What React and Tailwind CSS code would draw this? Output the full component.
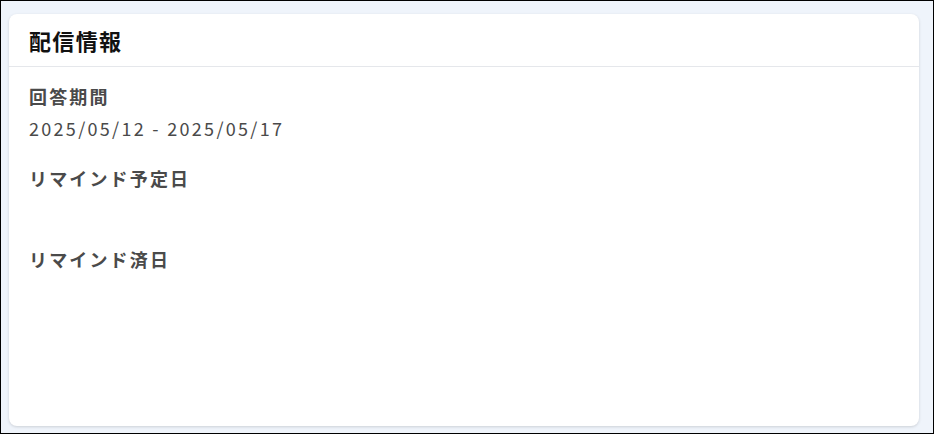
export default function App() {
  return (
    <div
      className="h-[434px] w-[934px] border border-black bg-[#eff4fb] pt-[13px] pl-[8px] pr-[14px] pb-[7px] flex"
      style={{ fontFamily: '"Noto Sans CJK JP", "Noto Sans", sans-serif' }}
    >
      <div className="flex-1 flex flex-col rounded-lg bg-white shadow-[0_1px_3px_rgba(0,0,0,0.15)]">
        <div className="h-[53px] flex items-center px-5 border-b border-[#e5e7eb]">
          <h2 className="text-[22px] font-bold text-[#111] tracking-[0.06em] leading-[28px]">配信情報</h2>
        </div>
        <div className="px-5 pt-[17px] flex flex-col">
          <div className="text-[18px] font-bold text-[#4a4a4a] tracking-[2.15px] leading-[24px]">回答期間</div>
          <div className="mt-[8px] text-[18px] text-[#4a4a4a] tracking-[2.3px] leading-[24px]">2025/05/12 - 2025/05/17</div>
          <div className="mt-[26px] text-[18px] font-bold text-[#4a4a4a] tracking-[2.15px] leading-[24px]">リマインド予定日</div>
          <div className="h-[57px]"></div>
          <div className="text-[18px] font-bold text-[#4a4a4a] tracking-[2.15px] leading-[24px]">リマインド済日</div>
        </div>
      </div>
    </div>
  );
}
